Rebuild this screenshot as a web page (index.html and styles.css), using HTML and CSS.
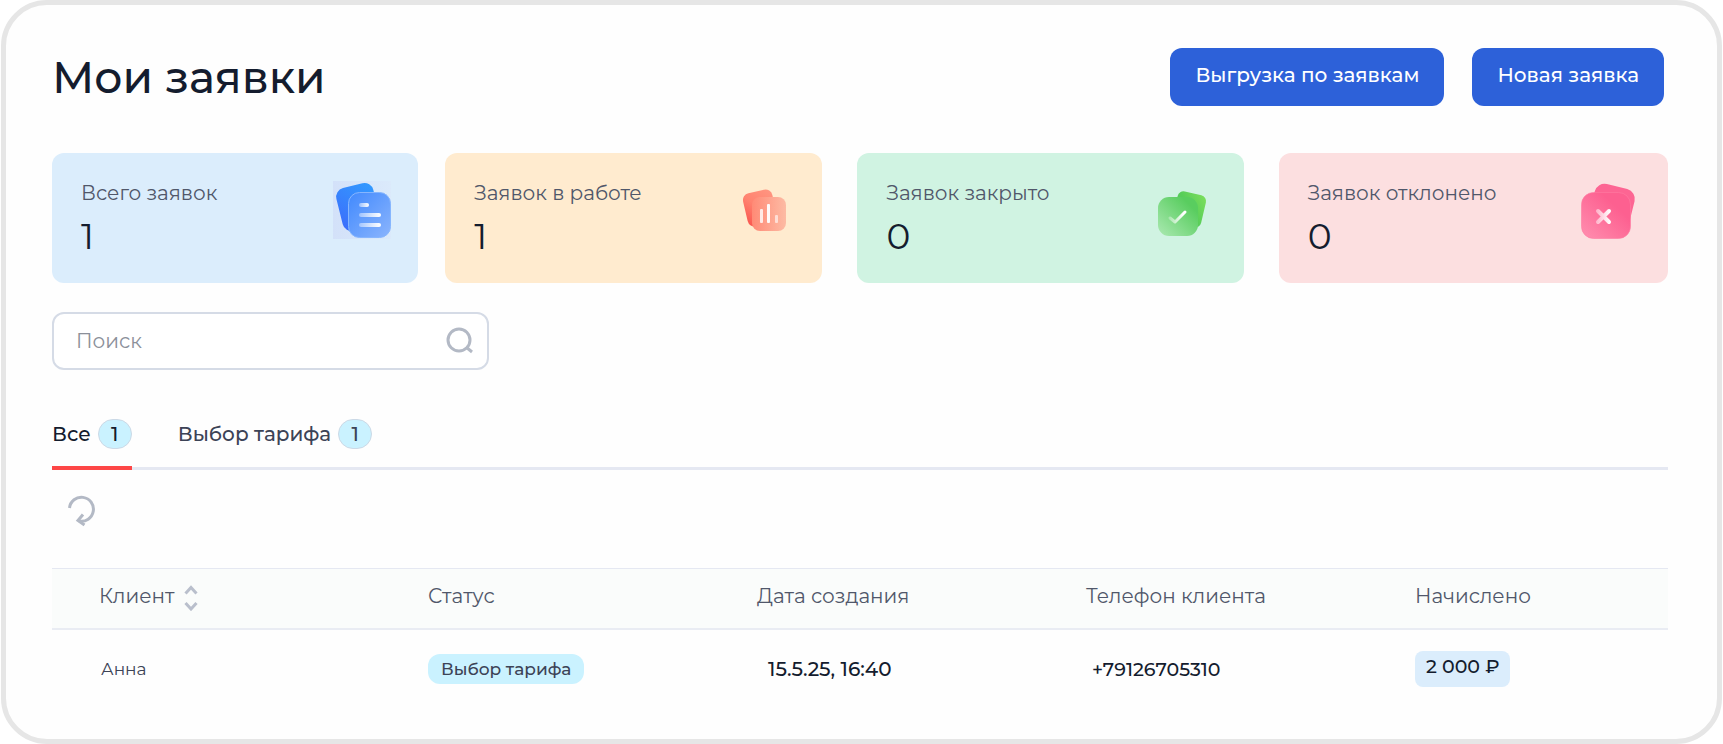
FILE: index.html
```html
<!DOCTYPE html>
<html lang="ru">
<head>
<meta charset="UTF-8">
<meta name="viewport" content="width=device-width, initial-scale=1.0">
<title>Мои заявки</title>
<link rel="stylesheet" href="styles.css">
</head>
<body>
<main class="frame">
    <header class="header">
        <h1>Мои заявки</h1>
        <div class="actions">
            <button type="button" class="btn">Выгрузка по заявкам</button>
            <button type="button" class="btn">Новая заявка</button>
        </div>
    </header>

    <section class="stats">
        <div class="stat stat-total">
            <div>
                <div class="stat-label">Всего заявок</div>
                <div class="stat-value">1</div>
            </div>
            <svg class="stat-icon" viewBox="10 13 64 64" aria-hidden="true">
                <defs>
                    <linearGradient id="blueBack" x1="1" y1="0" x2="0" y2="1">
                        <stop offset="0" stop-color="#329cff"/>
                        <stop offset="1" stop-color="#3c6cfb"/>
                    </linearGradient>
                    <linearGradient id="blueFront" x1="0" y1="0" x2="1" y2="1">
                        <stop offset="0" stop-color="#4189fd"/>
                        <stop offset="1" stop-color="#8bb5fd"/>
                    </linearGradient>
                    <linearGradient id="fade" x1="0" y1="0" x2="1" y2="0">
                        <stop offset="0" stop-color="#fff" stop-opacity=".4"/>
                        <stop offset="1" stop-color="#fff"/>
                    </linearGradient>
                    <linearGradient id="blueGlow" x1="0" y1="0" x2="1" y2="0">
                        <stop offset="0" stop-color="#d3e1f9"/>
                        <stop offset="1" stop-color="#dbeafb"/>
                    </linearGradient>
                </defs>
                <rect x="13" y="16" width="58" height="58" fill="url(#blueGlow)"/>
                <rect x="19" y="20" width="38" height="44" rx="9" fill="url(#blueBack)" transform="rotate(-14 38 42)"/>
                <rect x="28.5" y="27.5" width="42" height="45" rx="11" fill="url(#blueFront)" stroke="#86b6fe"/>
                <rect x="39" y="38" width="10" height="4" rx="2" fill="url(#fade)"/>
                <rect x="39" y="48" width="22" height="4" rx="2" fill="url(#fade)"/>
                <rect x="39" y="58" width="22" height="4" rx="2" fill="url(#fade)"/>
            </svg>
        </div>
        <div class="stat stat-work">
            <div>
                <div class="stat-label">Заявок в работе</div>
                <div class="stat-value">1</div>
            </div>
            <svg class="stat-icon" viewBox="9 8 64 64" aria-hidden="true">
                <defs>
                    <linearGradient id="redBack" x1="1" y1="0" x2="0" y2="1">
                        <stop offset="0" stop-color="#ff9782"/>
                        <stop offset=".5" stop-color="#ff8370"/>
                        <stop offset="1" stop-color="#f9524c"/>
                    </linearGradient>
                    <linearGradient id="redFront" x1="0" y1="0" x2="1" y2="0">
                        <stop offset="0" stop-color="#ff8a76"/>
                        <stop offset="1" stop-color="#fdbba4"/>
                    </linearGradient>
                </defs>
                <rect x="20" y="21" width="30" height="34" rx="7" fill="url(#redBack)" transform="rotate(-13 35 38)"/>
                <rect x="27" y="27" width="34" height="34" rx="8" fill="url(#redFront)"/>
                <rect x="35" y="39" width="3" height="14" rx="1" fill="#fff" fill-opacity=".8"/>
                <rect x="42" y="34" width="3" height="19" rx="1" fill="#fff" fill-opacity=".95"/>
                <rect x="50" y="45" width="3" height="8" rx="1" fill="#fff" fill-opacity=".6"/>
            </svg>
        </div>
        <div class="stat stat-closed">
            <div>
                <div class="stat-label">Заявок закрыто</div>
                <div class="stat-value">0</div>
            </div>
            <svg class="stat-icon" viewBox="15 8 64 64" aria-hidden="true">
                <defs>
                    <linearGradient id="greenBack" x1="0" y1="1" x2="1" y2="0">
                        <stop offset=".5" stop-color="#57cd59"/>
                        <stop offset="1" stop-color="#7ee05b"/>
                    </linearGradient>
                    <linearGradient id="greenFront" x1="0" y1="1" x2="1" y2="0">
                        <stop offset="0" stop-color="#abe9b2"/>
                        <stop offset=".8" stop-color="#59cd5f"/>
                    </linearGradient>
                    <linearGradient id="checkFade" gradientUnits="userSpaceOnUse" x1="28" y1="0" x2="42" y2="0">
                        <stop offset="0" stop-color="#fff" stop-opacity=".3"/>
                        <stop offset="1" stop-color="#fff"/>
                    </linearGradient>
                </defs>
                <rect x="34" y="23" width="29" height="33" rx="6" fill="url(#greenBack)" transform="rotate(13 49 39)"/>
                <rect x="17" y="27" width="40" height="39" rx="11" fill="url(#greenFront)"/>
                <path d="M29 48l5 4L44 42" fill="none" stroke="url(#checkFade)" stroke-width="3" stroke-linecap="round" stroke-linejoin="round"/>
            </svg>
        </div>
        <div class="stat stat-rejected">
            <div>
                <div class="stat-label">Заявок отклонено</div>
                <div class="stat-value">0</div>
            </div>
            <svg class="stat-icon" viewBox="14 13 64 64" aria-hidden="true">
                <defs>
                    <linearGradient id="pinkFront" x1="1" y1="0" x2="0" y2="1">
                        <stop offset=".3" stop-color="#fd6090"/>
                        <stop offset="1" stop-color="#ff8fb0"/>
                    </linearGradient>
                    <linearGradient id="crossFade" gradientUnits="userSpaceOnUse" x1="30" y1="0" x2="44" y2="0">
                        <stop offset="0" stop-color="#fff" stop-opacity=".45"/>
                        <stop offset="1" stop-color="#fff"/>
                    </linearGradient>
                </defs>
                <rect x="25" y="21" width="41" height="47" rx="10" fill="#fd6593" transform="rotate(14 46 44)"/>
                <rect x="15.5" y="27.5" width="49" height="46" rx="12" fill="url(#pinkFront)" stroke="#ff7ba2" stroke-opacity=".6"/>
                <path d="M32 46l11 11M43 46L32 57" stroke="url(#crossFade)" stroke-width="4" stroke-linecap="round"/>
            </svg>
        </div>
    </section>

    <form class="search" role="search">
        <input type="text" placeholder="Поиск" aria-label="Поиск">
        <button type="submit" class="icon-btn" aria-label="Найти">
            <svg width="28" height="28" viewBox="0 0 28 28" fill="none" stroke="#b3b9c5" stroke-width="3">
                <circle cx="13" cy="13" r="11"/>
                <path d="M20 20l6 5"/>
            </svg>
        </button>
    </form>

    <nav class="tabs">
        <a href="#all" class="tab active">Все <span class="count">1</span></a>
        <a href="#tariff" class="tab">Выбор тарифа <span class="count">1</span></a>
    </nav>

    <button type="button" class="icon-btn refresh" aria-label="Обновить">
        <svg width="28" height="32" viewBox="0 0 28 32" fill="none" stroke="#b3b9c5" stroke-width="3">
            <path d="M1.5 13A12 12 0 1 1 11 26"/>
            <path d="M15 19.500L10 25.500l6.500 4.500"/>
        </svg>
    </button>

    <table class="orders">
        <thead>
            <tr>
                <th>
                    <button type="button" class="sort">Клиент
                        <svg width="14" height="26" viewBox="0 0 14 26" fill="none" stroke="#b9bfcc" stroke-width="3">
                            <path d="M1.500 8.500L7 2.500l5.500 6M1.500 18L7 24l5.500-6"/>
                        </svg>
                    </button>
                </th>
                <th>Статус</th>
                <th>Дата создания</th>
                <th>Телефон клиента</th>
                <th>Начислено</th>
            </tr>
        </thead>
        <tbody>
            <tr>
                <td class="client">Анна</td>
                <td><span class="status">Выбор тарифа</span></td>
                <td class="date">15.5.25, 16:40</td>
                <td class="phone">+79126705310</td>
                <td><span class="amount">2 000 ₽</span></td>
            </tr>
        </tbody>
    </table>
</main>
</body>
</html>
```
FILE: styles.css
```css
* {
    box-sizing: border-box;
}

body {
    margin: 0;
    background-color: #fff;
    color: #141c2e;
    font-family: Montserrat, Inter, sans-serif;
    font-size: 20px;
}

button, input {
    font: inherit;
    color: inherit;
}

.frame {
    min-height: 100vh;
    margin: 0 1px;
    padding: 43px 49px 24px 46px;
    border: 5px solid #e6e6e6;
    border-radius: 46px;
    background-color: #fefefe;
}

.header {
    display: flex;
    justify-content: space-between;
    align-items: center;
    padding-right: 4px;
}

h1 {
    margin: 0;
    font-size: 44px;
    font-weight: 500;
    line-height: 58px;
}

.actions {
    display: flex;
    gap: 28px;
}

.btn {
    height: 58px;
    padding: 0 25px 4px;
    border: none;
    border-radius: 12px;
    background-color: #2d61d9;
    color: #fff;
    font-weight: 500;
    cursor: pointer;
}

.stats {
    display: grid;
    grid-template-columns: 366fr 377fr 394fr 397fr;
    column-gap: 27px;
    margin-top: 47px;
}

.stat {
    display: flex;
    justify-content: space-between;
    align-items: flex-start;
    min-height: 130px;
    padding: 25px 24px 25px 29px;
    border-radius: 12px;
}

.stat-total {
    background-color: #dbedfc;
}

.stat-work {
    background-color: #ffebcf;
}

.stat-closed {
    margin-left: 8px;
    background-color: #d0f3e2;
}

.stat-rejected {
    margin-left: 8px;
    background-color: #fcdfe0;
}

.stat-label {
    color: #50576a;
    line-height: 30px;
}

.stat-value {
    margin-top: 8px;
    font-size: 36px;
    line-height: 40px;
}

.stat-icon {
    flex: none;
    width: 64px;
    height: 64px;
}

.search {
    display: flex;
    align-items: center;
    width: 437px;
    max-width: 100%;
    height: 58px;
    margin-top: 29px;
    padding: 0 13px 0 22px;
    border: 2px solid #d5dbe6;
    border-radius: 12px;
    background-color: #fff;
}

.search input {
    flex: 1;
    min-width: 0;
    padding: 0;
    border: none;
    outline: none;
    background: none;
}

.search input::placeholder {
    color: #8b909a;
    opacity: 1;
}

.icon-btn {
    display: block;
    padding: 0;
    border: none;
    background: none;
    cursor: pointer;
}

.icon-btn svg {
    display: block;
}

.tabs {
    display: flex;
    gap: 46px;
    margin-top: 49px;
    border-bottom: 3px solid #e5e8f2;
}

.tab {
    display: flex;
    align-items: center;
    gap: 7px;
    margin-bottom: -3px;
    padding-bottom: 17px;
    border-bottom: 4px solid transparent;
    color: #3c4356;
    font-weight: 500;
    text-decoration: none;
}

.tab.active {
    border-bottom-color: #fd4646;
    color: #141c2e;
}

.count {
    width: 34px;
    border: 1px solid #ccd9e6;
    border-radius: 15px;
    background-color: #caf2ff;
    line-height: 28px;
    text-align: center;
}

.refresh {
    margin: 25px 0 0 16px;
}

.orders {
    width: 100%;
    margin-top: 41px;
    border-collapse: collapse;
    table-layout: fixed;
}

.orders th, .orders td {
    padding: 0 0 0 47px;
    text-align: left;
    white-space: nowrap;
}

.orders th {
    width: 329px;
    height: 60px;
    padding-bottom: 4px;
    border-top: 1px solid #e5e8f2;
    border-bottom: 2px solid #e9ecf3;
    background-color: #fafcfb;
    color: #50576a;
    font-weight: 400;
}

.orders th:last-child {
    width: auto;
}

.orders td {
    height: 80px;
}

.sort {
    display: flex;
    align-items: center;
    gap: 10px;
    padding: 0;
    border: none;
    background: none;
    cursor: pointer;
}

.sort svg {
    margin-top: 4px;
}

.orders .client {
    padding-left: 49px;
    color: #3c4356;
    font-size: 17px;
}

.orders .date {
    padding-left: 58px;
    font-weight: 500;
}

.orders .phone {
    padding-left: 53px;
    font-size: 19px;
    font-weight: 500;
}

.status, .amount {
    display: inline-block;
    font-weight: 500;
}

.status {
    padding: 0 13px;
    border-radius: 12px;
    background-color: #caf2ff;
    color: #3c4356;
    font-size: 17px;
    line-height: 30px;
}

.amount {
    padding: 0 11px 4px;
    border-radius: 8px;
    background-color: #dbedfc;
    font-size: 19px;
    line-height: 32px;
}
```
